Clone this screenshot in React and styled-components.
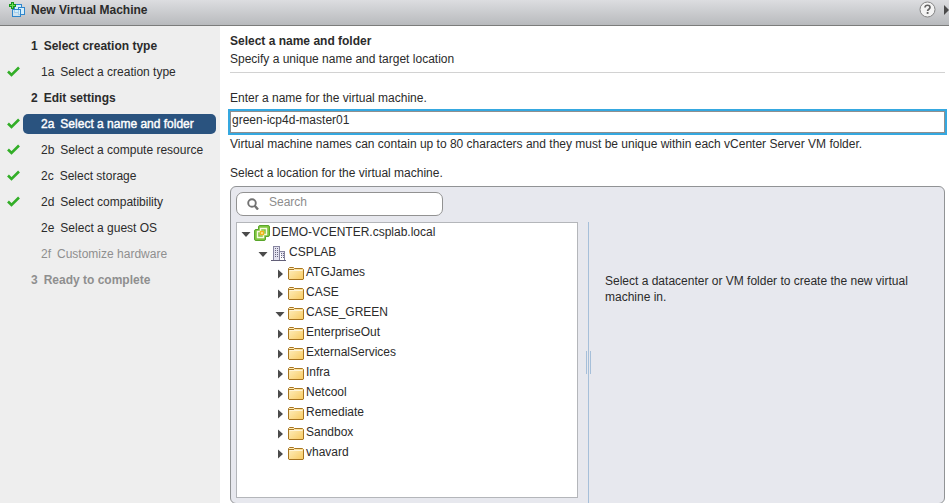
import React, { useState } from "react";
import styled, { createGlobalStyle, css } from "styled-components";

const GlobalStyle = createGlobalStyle`
  *, *::before, *::after { box-sizing: border-box; }
  body {
    margin: 0;
    overflow: hidden;
    background: #fff;
    color: #2b2b2b;
    font: 12px/16px "Liberation Sans", Arial, Helvetica, sans-serif;
  }
  button, input { font: inherit; color: inherit; }
`;

const Dialog = styled.div`
  display: flex;
  flex-direction: column;
  min-height: 100vh;
`;

const TitleBar = styled.header`
  display: flex;
  align-items: center;
  height: 26px;
  padding: 0 0 6px 9px;
  gap: 6px;
  background: linear-gradient(#dcdde0, #b8babd);
  border-bottom: 1px solid #7b7c7b;
`;

const Title = styled.h1`
  flex: 1;
  margin: 0;
  font-size: 12px;
  line-height: 16px;
`;

const BarButton = styled.button`
  display: flex;
  padding: 0;
  border: 0;
  background: none;
`;

const Body = styled.div`
  display: flex;
  flex: 1;
`;

const Sidebar = styled.nav`
  flex: 0 0 220px;
  padding-top: 7px;
  background: #eeeeee;
`;

const StepList = styled.ol`
  margin: 0;
  padding: 0;
  list-style: none;
`;

const StepRow = styled.li`
  display: grid;
  grid-template-columns: 16px 1fr;
  align-items: center;
  column-gap: 7px;
  height: 26px;
  padding: 0 4px 0 0;
`;

const StepMark = styled.span`
  display: flex;
  justify-content: flex-end;
  margin-right: -4px;
`;

const StepButton = styled.button`
  display: flex;
  gap: 6px;
  height: 20px;
  padding: 2px 0 2px ${(p) => (p.$section ? 8 : 18)}px;
  border: 0;
  border-radius: 5px;
  background: none;
  text-align: left;
  font-weight: ${(p) => (p.$section ? "bold" : "normal")};
  ${(p) => p.$active && css`
    background: #2a537f;
    color: #fff;
    -webkit-text-stroke: 0.4px #fff;
  `}
  &:disabled { color: #8f8f8f; }
`;

const Main = styled.main`
  flex: 1;
  min-width: 0;
  padding: 7px 4px 0 10px;
`;

const Intro = styled.section`
  padding-bottom: 5px;
  border-bottom: 1px solid #d2d2d2;
`;

const Heading = styled.h2`
  margin: 0 0 2px;
  font-size: 12px;
  line-height: 16px;
`;

const Text = styled.p`
  margin: 0;
`;

const FieldLabel = styled.label`
  display: block;
  margin: 17px 0 5px;
`;

const NameInput = styled.input`
  display: block;
  width: 100%;
  height: 22px;
  padding: 0 1px 4px;
  border: 1px solid #8f8f8f;
  background: #fff;
  outline: 2px solid #35a8e0;
`;

const Hint = styled.p`
  margin: 3px 0 13px;
`;

const Picker = styled.section`
  margin-top: 5px;
  padding: 5px 5px 0;
  border: 1px solid #919395;
  border-radius: 6px;
  background: #e7e8ee;
`;

const SearchBox = styled.div`
  display: flex;
  align-items: center;
  gap: 10px;
  width: 207px;
  height: 24px;
  margin-bottom: 6px;
  padding-left: 10px;
  border: 1px solid #929292;
  border-radius: 7px;
  background: #fff;
`;

const SearchInput = styled.input`
  flex: 1;
  min-width: 0;
  height: 22px;
  padding: 0 0 4px;
  border: 0;
  background: none;
  outline: none;
  &::placeholder { color: #8d8d8d; opacity: 1; }
`;

const Panes = styled.div`
  display: grid;
  grid-template-columns: 1fr 19px 1fr;
`;

const TreePane = styled.div`
  min-height: 276px;
  margin-bottom: 5px;
  border: 1px solid #b4b6ba;
  background: #fff;
`;

const Tree = styled.ul`
  margin: 0;
  padding: 0;
  list-style: none;
`;

const TreeRow = styled.div`
  display: flex;
  align-items: center;
  height: 20px;
  padding-left: ${(p) => 4 + p.$level * 17}px;
`;

const Toggle = styled.button`
  display: flex;
  padding: 2px 0 0;
  border: 0;
  background: none;
`;

const NodeIcon = styled.span`
  display: flex;
  align-items: center;
  width: 16px;
  height: 20px;
  margin: 0 2px 0 3px;
`;

const NodeLabel = styled.span`
  padding-bottom: 2px;
`;

const Splitter = styled.div`
  display: flex;
  align-items: center;
  padding-left: 8px;
  gap: 1px;
`;

const SplitLine = styled.span`
  width: 1px;
  height: ${(p) => (p.$full ? "100%" : "23px")};
  background: #a6bfd9;
`;

const Details = styled.div`
  padding: 51px 8px 0;
`;

function VmIcon() {
  return (
    <svg width="16" height="16" viewBox="0 0 16 16" shapeRendering="crispEdges" aria-hidden="true">
      <g fill="#d4eefc" stroke="#2f86cc">
        <path d="M5.500 2.500h7v8h-7z" />
        <path d="M9.500 5.500h6v7h-6z" />
        <path fillOpacity=".7" d="M3.500 7.500h8v7h-8z" />
      </g>
      <path fill="#16941b" d="M2 0h3v2h2v3H5v2H2V5H0V2h2z" />
      <path fill="#70dc55" d="M3 1h1v2h2v1H4v2H3V4H1V3h2z" />
    </svg>
  );
}

function HelpIcon() {
  return (
    <svg width="17" height="17" viewBox="0 0 17 17" fill="none" aria-hidden="true">
      <circle cx="8.500" cy="8.500" r="7.500" fill="#f3f3f3" stroke="#858585" />
      <path d="M6 6.500c.2-3 5-3 5 0 0 1.700-2.400 1.700-2.400 3.500" stroke="#636363" strokeWidth="1.700" />
      <path d="M7.700 11h1.800v1.900H7.700z" fill="#636363" />
    </svg>
  );
}

function CheckIcon() {
  return (
    <svg width="13" height="12" viewBox="0 0 13 12" aria-label="Complete" role="img">
      <path d="M1 5.500l3.500 3.500L12 1.500" fill="none" stroke="#32ae27" strokeWidth="2.600" />
    </svg>
  );
}

function SearchIcon() {
  return (
    <svg width="12" height="12" viewBox="0 0 12 12" fill="none" stroke="#727272" aria-hidden="true">
      <circle cx="5" cy="5" r="3.800" strokeWidth="1.900" />
      <path d="M7.500 7.500l3.500 4" strokeWidth="2.400" />
    </svg>
  );
}

function Arrow({ open }) {
  return (
    <svg width="10" height="10" viewBox="0 0 10 10" fill="#4b4b4b" aria-hidden="true">
      <path d={open ? "M0.500 3h9L5 8z" : "M3 0.500v9L8 5z"} />
    </svg>
  );
}

function VCenterIcon() {
  return (
    <svg width="16" height="16" viewBox="0 0 16 16" aria-hidden="true">
      <path d="M6 .5h8q1.500 0 1.500 1.500v8q0 1.500-1.500 1.500h-2.500V14q0 1.500-1.500 1.500H2Q.5 15.500.5 14V6Q.5 4.500 2 4.500h2.500V2Q4.500.5 6 .5z" fill="#7fc63f" stroke="#59a52b" />
      <g fill="none" stroke="#f7fbe2" strokeWidth="1.400">
        <path d="M6.500 3.500h6v6h-6z" />
        <path d="M3.500 6.500h6v6h-6z" />
      </g>
      <path d="M6.500 6.500h3v3h-3z" fill="#fff6c8" stroke="#efb51c" strokeWidth="1.400" />
    </svg>
  );
}

function DatacenterIcon() {
  return (
    <svg width="16" height="16" viewBox="0 0 16 16" shapeRendering="crispEdges" aria-hidden="true">
      <path d="M2.500 15V1.500h6V15M8.500 6.500h5V15" fill="#e3e2f0" stroke="#8785a0" />
      <path d="M0 15.500h15" stroke="#625f78" />
      <path d="M4.500 3v10M6.500 3v10M10.500 8v6M12.500 8v6" stroke="#69677e" strokeDasharray="1 1" />
    </svg>
  );
}

function FolderIcon() {
  return (
    <svg width="16" height="13" viewBox="0 0 16 13" aria-hidden="true">
      <defs>
        <linearGradient id="folder-face" x2="1" y2="1">
          <stop stopColor="#fff1c4" />
          <stop offset="1" stopColor="#f8ca61" />
        </linearGradient>
      </defs>
      <path d="M.5 12V1.500l1-1h4l1 1h8l1 1V12l-.5.5H1z" fill="url(#folder-face)" stroke="#a87520" />
      <path d="M1 2.500h5" stroke="#a87520" />
      <path d="M1.500 3.500h13" stroke="#fff5d7" />
    </svg>
  );
}

const steps = [
  { no: "1", label: "Select creation type", section: true },
  { no: "1a", label: "Select a creation type", done: true },
  { no: "2", label: "Edit settings", section: true },
  { no: "2a", label: "Select a name and folder", done: true, active: true },
  { no: "2b", label: "Select a compute resource", done: true },
  { no: "2c", label: "Select storage", done: true },
  { no: "2d", label: "Select compatibility", done: true },
  { no: "2e", label: "Select a guest OS" },
  { no: "2f", label: "Customize hardware", disabled: true },
  { no: "3", label: "Ready to complete", section: true, disabled: true },
];

const folders = [
  "ATGJames", "CASE", "CASE_GREEN", "EnterpriseOut", "ExternalServices",
  "Infra", "Netcool", "Remediate", "Sandbox", "vhavard",
];

const inventory = {
  label: "DEMO-VCENTER.csplab.local",
  icon: VCenterIcon,
  open: true,
  children: [{
    label: "CSPLAB",
    icon: DatacenterIcon,
    open: true,
    children: folders.map((label) => ({ label, icon: FolderIcon, open: label === "CASE_GREEN" })),
  }],
};

function TreeNode({ node, level = 0 }) {
  const [open, setOpen] = useState(node.open);
  const Icon = node.icon;
  return (
    <li role="treeitem" aria-expanded={open}>
      <TreeRow $level={level}>
        <Toggle type="button" aria-label={`Toggle ${node.label}`} onClick={() => setOpen(!open)}>
          <Arrow open={open} />
        </Toggle>
        <NodeIcon><Icon /></NodeIcon>
        <NodeLabel>{node.label}</NodeLabel>
      </TreeRow>
      {open && node.children && (
        <Tree role="group">
          {node.children.map((child) => <TreeNode key={child.label} node={child} level={level + 1} />)}
        </Tree>
      )}
    </li>
  );
}

export default function App() {
  const [name, setName] = useState("green-icp4d-master01");
  return (
    <Dialog>
      <GlobalStyle />
      <TitleBar>
        <VmIcon />
        <Title>New Virtual Machine</Title>
        <BarButton type="button" aria-label="Help"><HelpIcon /></BarButton>
        <BarButton type="button" aria-label="Expand">
          <svg width="7" height="10" viewBox="0 0 7 10" aria-hidden="true"><path d="M2 0v10l5-5z" fill="#4b4b4b" /></svg>
        </BarButton>
      </TitleBar>
      <Body>
        <Sidebar aria-label="Wizard steps">
          <StepList>
            {steps.map((s) => (
              <StepRow key={s.no}>
                <StepMark>{s.done && <CheckIcon />}</StepMark>
                <StepButton type="button" $section={s.section} $active={s.active} disabled={s.disabled}>
                  <span>{s.no}</span>
                  <span>{s.label}</span>
                </StepButton>
              </StepRow>
            ))}
          </StepList>
        </Sidebar>
        <Main>
          <Intro>
            <Heading>Select a name and folder</Heading>
            <Text>Specify a unique name and target location</Text>
          </Intro>
          <FieldLabel htmlFor="vm-name">Enter a name for the virtual machine.</FieldLabel>
          <NameInput id="vm-name" type="text" value={name} onChange={(e) => setName(e.target.value)} />
          <Hint>Virtual machine names can contain up to 80 characters and they must be unique within each vCenter Server VM folder.</Hint>
          <Text id="location-label">Select a location for the virtual machine.</Text>
          <Picker aria-labelledby="location-label">
            <SearchBox>
              <SearchIcon />
              <SearchInput type="text" placeholder="Search" aria-label="Search" />
            </SearchBox>
            <Panes>
              <TreePane>
                <Tree role="tree" aria-labelledby="location-label"><TreeNode node={inventory} /></Tree>
              </TreePane>
              <Splitter role="separator" aria-orientation="vertical">
                <SplitLine /><SplitLine $full /><SplitLine />
              </Splitter>
              <Details>Select a datacenter or VM folder to create the new virtual machine in.</Details>
            </Panes>
          </Picker>
        </Main>
      </Body>
    </Dialog>
  );
}
